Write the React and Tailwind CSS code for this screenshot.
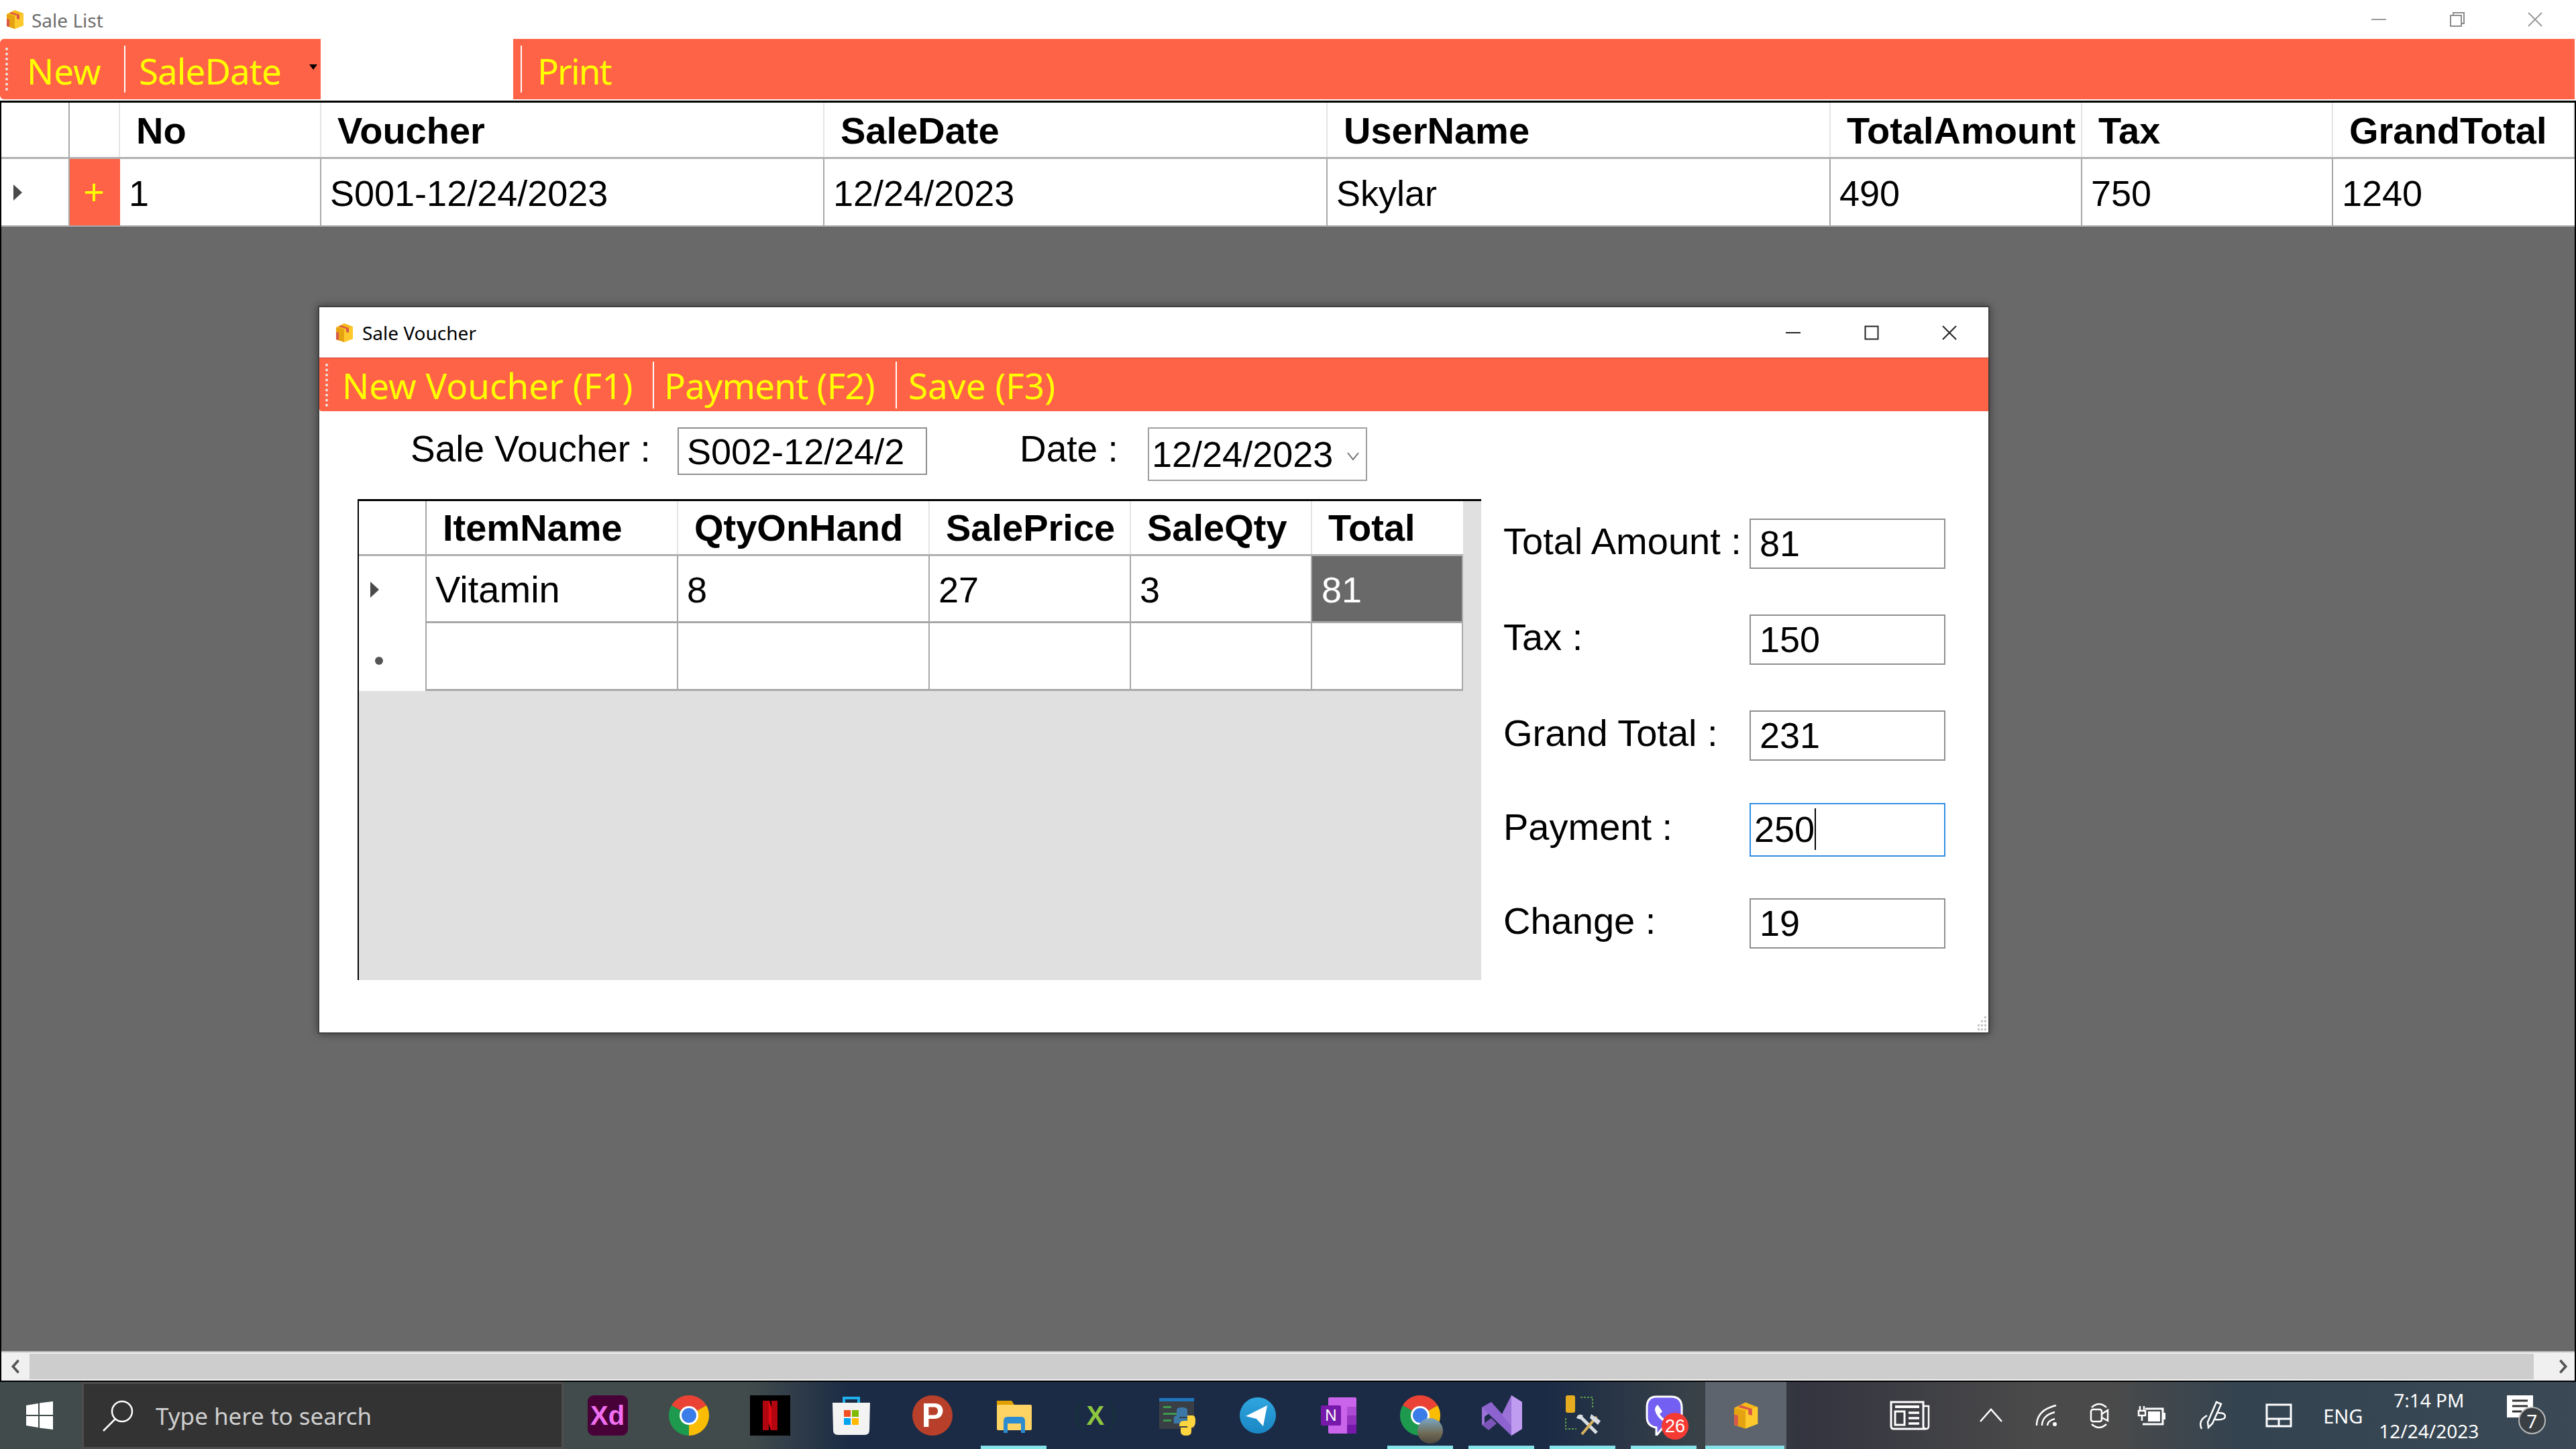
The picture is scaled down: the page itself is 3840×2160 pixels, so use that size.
import React from 'react';

const UI_FONT = "font-['Noto_Sans',sans-serif]";

// main list columns
const LIST_COLS = 'grid grid-cols-[102px_75px_300px_750px_750px_750px_375px_374px_360px]';
const VOUCHER_COLS = 'grid grid-cols-[101px_375px_375px_300px_270px_225px]';

const LIST_HEAD = ['', '', 'No', 'Voucher', 'SaleDate', 'UserName', 'TotalAmount', 'Tax', 'GrandTotal'];
const LIST_ROW = ['1', 'S001-12/24/2023', '12/24/2023', 'Skylar', '490', '750', '1240'];
const VOUCHER_HEAD = ['ItemName', 'QtyOnHand', 'SalePrice', 'SaleQty', 'Total'];

const FIELDS = [
  { label: 'Total Amount :', value: '81', row: 'mt-[160px] h-[75px]', box: 'border-[#8f8f8f]' },
  { label: 'Tax :', value: '150', row: 'mt-[68px] h-[75px]', box: 'border-[#8f8f8f]' },
  { label: 'Grand Total :', value: '231', row: 'mt-[68px] h-[75px]', box: 'border-[#8f8f8f]' },
  { label: 'Payment :', value: '250', row: 'mt-[63px] h-[80px]', box: 'border-[#2f8fe0]', caret: true },
  { label: 'Change :', value: '19', row: 'mt-[62px] h-[75px]', box: 'border-[#8f8f8f]' },
];

function BoxIcon({ className }) {
  return (
    <svg viewBox="0 0 30 30" className={className}>
      <path d="M3 7 L15 1 L28 6 L28 24 L15 29 L3 25 Z" fill="#f6b91a" />
      <path d="M15 10 L28 6 L28 24 L15 29 Z" fill="#fdc92c" />
      <path d="M3 7 L15 10 L15 29 L3 25 Z" fill="#e5a312" />
      <path d="M10 4 L22 8 L22 15 L18 14 L18 9 L7 6 Z" fill="#d9574a" />
      <path d="M3 14 L7 15 L7 26 L3 25 Z" fill="#d9574a" />
    </svg>
  );
}

function Grip() {
  return <div className="w-[4px] h-[64px] border-l-[4px] border-dotted border-[#e8e8e8]" />;
}

function Sep() {
  return <div className="w-[2px] h-[70px] bg-white" />;
}

function ToolText({ children, className = '' }) {
  return <span className={`${UI_FONT} text-[53px] leading-none text-[#ffff00] whitespace-nowrap ${className}`}>{children}</span>;
}

function MinIcon({ color }) {
  return <svg width="24" height="4" viewBox="0 0 24 4"><rect width="22" height="2" y="1" fill={color} /></svg>;
}

function MaxIcon() {
  return <svg width="22" height="22" viewBox="0 0 22 22"><rect x="1.5" y="1.5" width="19" height="19" fill="none" stroke="#222" strokeWidth="2" /></svg>;
}

function RestoreIcon() {
  return (
    <svg width="22" height="22" viewBox="0 0 22 22" fill="none" stroke="#8c8c8c" strokeWidth="2">
      <rect x="1" y="5" width="16" height="16" />
      <path d="M5 5 V1 H21 V17 H17" />
    </svg>
  );
}

function CloseIcon({ color }) {
  return (
    <svg width="22" height="22" viewBox="0 0 22 22" fill="none" stroke={color} strokeWidth="2">
      <path d="M1 1 L21 21 M21 1 L1 21" />
    </svg>
  );
}

function WinControl({ children }) {
  return <div className="w-[116px] flex items-center justify-center">{children}</div>;
}

function ArrowMark({ className = '' }) {
  return <div className={`w-0 h-0 border-y-[12px] border-y-transparent border-l-[13px] border-l-[#4a4a4a] ${className}`} />;
}

/* ---- taskbar pictures ---- */

function ChromeLogo() {
  return (
    <svg viewBox="0 0 60 60" className="w-[60px] h-[60px]">
      <path d="M30 30 L4 15 A30 30 0 0 1 56 15 Z" fill="#ea4335" />
      <path d="M30 30 L56 15 A30 30 0 0 1 30 60 Z" fill="#fbbc04" />
      <path d="M30 30 L30 60 A30 30 0 0 1 4 15 Z" fill="#1e9a4e" />
      <circle cx="30" cy="30" r="14" fill="#fff" />
      <circle cx="30" cy="30" r="11" fill="#3b7de8" />
    </svg>
  );
}

function StoreLogo() {
  return (
    <svg viewBox="0 0 60 60" className="w-[60px] h-[60px]">
      <path d="M19 14 V4 H41 V14" fill="none" stroke="#1fb0ee" strokeWidth="4" />
      <path d="M2 11 H58 L57 52 Q57 59 50 59 H10 Q3 59 3 52 Z" fill="#f3f3f3" />
      <rect x="19" y="22" width="10" height="10" fill="#f25022" />
      <rect x="31" y="22" width="10" height="10" fill="#7fba00" />
      <rect x="19" y="34" width="10" height="10" fill="#00a4ef" />
      <rect x="31" y="34" width="10" height="10" fill="#ffb900" />
    </svg>
  );
}

function FolderLogo() {
  return (
    <svg viewBox="0 0 60 60" className="w-[60px] h-[60px]">
      <path d="M4 8 H26 L32 17 H4 Z" fill="#e0a100" />
      <rect x="4" y="14" width="52" height="38" rx="2" fill="#ffd465" />
      <path d="M14 56 V38 Q14 32 20 32 H40 Q46 32 46 38 V56 H40 V42 H20 V56 Z" fill="#2d8bd0" />
    </svg>
  );
}

function PythonLogo() {
  return (
    <svg viewBox="0 0 60 60" className="w-[60px] h-[60px]">
      <rect x="4" y="4" width="52" height="46" fill="#3a3f45" />
      <rect x="4" y="4" width="52" height="5" fill="#1f75bd" />
      <rect x="10" y="16" width="12" height="3" fill="#3c9a4c" />
      <rect x="10" y="26" width="24" height="3" fill="#3c9a4c" />
      <rect x="10" y="36" width="12" height="3" fill="#3c9a4c" />
      <path d="M30 22 Q30 18 38 18 Q46 18 46 22 V32 H34 V34 H46 Q46 42 38 42 H26 Q24 30 30 30 Z" fill="#3b78a8" />
      <path d="M46 30 H54 Q58 30 58 38 Q58 48 52 48 V54 Q52 60 44 60 Q36 60 36 54 V48 H46 V46 H34 Q34 38 40 38 H46 Z" fill="#ffd53f" />
    </svg>
  );
}

function TelegramLogo() {
  return (
    <svg viewBox="0 0 60 60" className="w-[60px] h-[60px]">
      <defs>
        <linearGradient id="tg" x1="0" y1="0" x2="0" y2="1">
          <stop offset="0" stopColor="#2fa6e0" />
          <stop offset="1" stopColor="#1a86c4" />
        </linearGradient>
      </defs>
      <circle cx="30" cy="30" r="27" fill="url(#tg)" />
      <path d="M12 31 L44 15 L38 46 L28 35 Z" fill="#fff" />
    </svg>
  );
}

function OneNoteLogo() {
  return (
    <svg viewBox="0 0 60 60" className="w-[60px] h-[60px]">
      <rect x="14" y="3" width="42" height="54" rx="2" fill="#ca64ea" />
      <rect x="42" y="17" width="14" height="13" fill="#ae4bd5" />
      <rect x="42" y="30" width="14" height="14" fill="#9332bf" />
      <rect x="42" y="44" width="14" height="13" fill="#7719aa" />
      <rect x="3" y="15" width="30" height="30" rx="2" fill="#7719aa" />
      <text x="18" y="38" textAnchor="middle" fontFamily="Liberation Sans" fontSize="24" fill="#fff">N</text>
    </svg>
  );
}

function VisualStudioLogo() {
  return (
    <svg viewBox="0 0 60 60" className="w-[60px] h-[60px]">
      <path d="M44 0 L60 10 V50 L44 60 L14 24 L4 32 V46 L14 52 L0 44 V18 L14 10 L30 28 Z" fill="#9a72d8" />
      <path d="M44 0 L60 10 V50 L44 60 Z" fill="#c09cf0" />
      <path d="M0 18 L14 10 L44 46 V60 Z" fill="#8d63cf" />
      <path d="M0 44 L14 34 L22 42 L10 52 Z" fill="#7c55b8" />
    </svg>
  );
}

function ToolsLogo() {
  return (
    <svg viewBox="0 0 60 60" className="w-[60px] h-[60px]">
      <rect x="4" y="0" width="14" height="26" rx="3" fill="#e5ac20" />
      <path d="M26 3 H44 V20" fill="none" stroke="#5d9b4a" strokeWidth="2" strokeDasharray="3 2" />
      <path d="M4 34 V50 H20" fill="none" stroke="#5d9b4a" strokeWidth="2" strokeDasharray="3 2" />
      <path d="M24 30 L50 56" stroke="#d8dde2" strokeWidth="5" />
      <path d="M20 34 Q22 26 30 30 L26 36 Z" fill="#d8dde2" />
      <path d="M50 32 L28 58" stroke="#d9b25c" strokeWidth="4" />
      <path d="M42 28 L56 38 L52 44 L40 34 Z" fill="#d8dde2" />
    </svg>
  );
}

function ViberLogo() {
  return (
    <svg viewBox="0 0 60 60" className="w-[60px] h-[60px]">
      <path d="M18 2 H40 Q56 2 56 18 V34 Q56 48 40 48 H28 L18 60 V48 Q4 46 4 32 V18 Q4 2 18 2 Z" fill="#7360f2" stroke="#fff" strokeWidth="3" />
      <path d="M20 14 L27 24 L23 28 Q27 34 33 37 L37 33 L44 40 Q38 46 30 40 Q18 32 16 22 Q16 17 20 14 Z" fill="#fff" />
    </svg>
  );
}

function AppCell({ under, active, children }) {
  return (
    <div className={`relative w-[121.2px] h-full flex items-center justify-center ${active ? 'bg-[#5d646e]' : ''}`}>
      {children}
      {under && <div className={`absolute bottom-0 h-[5px] bg-[#86e3ec] ${active ? 'left-0 right-[3px]' : 'left-[11px] w-[98px]'}`} />}
    </div>
  );
}

function TrayIcon({ className, children }) {
  return (
    <div className={`w-[60px] h-[60px] flex items-center justify-center ${className}`}>
      <svg viewBox="0 0 60 60" className="w-[60px] h-[60px]" fill="none" stroke="#fff" strokeWidth="2.5">{children}</svg>
    </div>
  );
}

function Taskbar() {
  return (
    <div className="h-[100px] flex items-stretch bg-[linear-gradient(90deg,#414b4b_0%,#414b4b_29%,#1b2b45_33%,#1b2b45_60%,#3a4248_66%,#33343f_70%,#4a4a4a_79%,#4a4a4a_82%,#334350_87%,#3a4955_100%)]">
      <div className="w-[122px] flex items-center justify-center pr-[4px]">
        <svg viewBox="0 0 40 42" className="w-[40px] h-[42px]" fill="#fff">
          <path d="M0 6 L18 3 V20 H0 Z" />
          <path d="M20 2.5 L40 0 V20 H20 Z" />
          <path d="M0 22 H18 V39 L0 36 Z" />
          <path d="M20 22 H40 V42 L20 39.5 Z" />
        </svg>
      </div>
      <div className="w-[718px] border-[3px] border-[#4d4d4d] bg-[#333333] flex items-center pl-[27px]">
        <svg viewBox="0 0 48 48" className="w-[48px] h-[48px]" fill="none" stroke="#fff" strokeWidth="2.5">
          <circle cx="30" cy="18" r="15" />
          <path d="M20 29 L2 47" />
        </svg>
        <span className={`${UI_FONT} ml-[32px] text-[35px] leading-none text-[#cfcfcf] whitespace-nowrap`}>Type here to search</span>
      </div>
      <div className="ml-[5px] flex items-stretch">
        <AppCell>
          <div className="w-[60px] h-[60px] rounded-[9px] bg-[#470137] flex items-center justify-center font-['Liberation_Sans',sans-serif] font-bold text-[40px] leading-none text-[#f06ef0]">Xd</div>
        </AppCell>
        <AppCell><ChromeLogo /></AppCell>
        <AppCell>
          <svg viewBox="0 0 60 60" className="w-[60px] h-[60px]">
            <rect width="60" height="60" fill="#000" />
            <path d="M19 8 H29 L41 52 H31 Z" fill="#e50914" />
            <rect x="19" y="8" width="9" height="44" fill="#b1060f" />
            <rect x="32" y="8" width="9" height="44" fill="#b1060f" />
          </svg>
        </AppCell>
        <AppCell><StoreLogo /></AppCell>
        <AppCell>
          <div className="w-[60px] h-[60px] rounded-full bg-[#b8402a] flex items-center justify-center font-['Liberation_Sans',sans-serif] font-bold text-[50px] leading-none text-white">P</div>
        </AppCell>
        <AppCell under><FolderLogo /></AppCell>
        <AppCell>
          <div className="w-[60px] h-[60px] flex items-center justify-center font-['Liberation_Sans',sans-serif] font-bold text-[40px] leading-none text-[#8dc63f] border-x-[3px] border-[#16333c] rounded-[30px]">X</div>
        </AppCell>
        <AppCell><PythonLogo /></AppCell>
        <AppCell><TelegramLogo /></AppCell>
        <AppCell><OneNoteLogo /></AppCell>
        <AppCell under>
          <div className="relative">
            <ChromeLogo />
            <div className="absolute right-[-4px] bottom-[-12px] w-[38px] h-[38px] rounded-full bg-[linear-gradient(180deg,#7ba7c4,#6f6a55_60%,#4d4a3d)]" />
          </div>
        </AppCell>
        <AppCell under><VisualStudioLogo /></AppCell>
        <AppCell under><ToolsLogo /></AppCell>
        <AppCell under>
          <div className="relative">
            <ViberLogo />
            <div className="absolute right-[-6px] bottom-[-6px] w-[40px] h-[40px] rounded-full bg-[#f53a34] flex items-center justify-center font-['Liberation_Sans',sans-serif] text-[27px] leading-none text-white">26</div>
          </div>
        </AppCell>
        <AppCell under active><BoxIcon className="w-[44px] h-[42px]" /></AppCell>
      </div>

      {/* tray */}
      <div className="flex items-center">
        <TrayIcon className="ml-[154px]">
          <path d="M2 10 H50 V46 Q50 50 54 50 H6 Q2 50 2 46 Z" strokeWidth="3" />
          <path d="M50 16 H58 V46 Q58 50 54 50" />
          <rect x="8" y="15" width="36" height="4" fill="#fff" stroke="none" />
          <rect x="8" y="24" width="14" height="20" strokeWidth="3" />
          <path d="M28 26 H44 M28 34 H44 M28 42 H44" strokeWidth="3.5" />
        </TrayIcon>
        <TrayIcon className="ml-[61px]"><path d="M14 39 L30 21 L46 39" /></TrayIcon>
        <TrayIcon className="ml-[23px]">
          <path d="M15 45 Q15 22 44 15" />
          <path d="M23 45 Q23 30 42 25" />
          <path d="M31 45 Q31 38 42 35" />
          <circle cx="42" cy="43" r="3" fill="#fff" stroke="none" />
        </TrayIcon>
        <TrayIcon className="ml-[18px]">
          <path d="M19 18 Q30 8 41 18" />
          <rect x="18" y="21" width="16" height="18" rx="3" />
          <path d="M34 28 L43 22 V38 L34 33" />
          <path d="M19 43 Q30 53 41 43" />
        </TrayIcon>
        <TrayIcon className="ml-[19px]">
          <path d="M12 16 V23 M18 16 V23 M10 23 H20 V30 H10 Z M15 30 V38" />
          <path d="M20 20 H46 V43 H16" strokeWidth="3" />
          <rect x="24" y="24" width="18" height="15" fill="#fff" stroke="none" />
          <rect x="47" y="26" width="3" height="10" fill="#fff" stroke="none" />
        </TrayIcon>
        <TrayIcon className="ml-[30px]">
          <path d="M36 10 L43 13 L30 42 L24 48 L23 40 Z" />
          <path d="M38 26 Q52 26 48 34 Q44 37 34 36" />
          <path d="M22 30 Q8 38 14 50" />
        </TrayIcon>
        <TrayIcon className="ml-[39px]">
          <rect x="12" y="14" width="36" height="32" strokeWidth="3" />
          <path d="M12 35 H48 M30 35 V46" strokeWidth="3" />
        </TrayIcon>
        <div className={`${UI_FONT} ml-[36px] w-[60px] text-[29px] leading-none text-white text-center`}>ENG</div>
        <div className={`${UI_FONT} ml-[18px] w-[160px] text-[28px] leading-none text-white text-center flex flex-col gap-[18px]`}>
          <span>7:14 PM</span>
          <span>12/24/2023</span>
        </div>
        <div className="relative ml-[27px] w-[60px] h-[60px]">
          <svg viewBox="0 0 39 33" className="absolute left-[9px] top-[0px] w-[39px] h-[33px]">
            <rect width="39" height="33" fill="#fff" />
            <path d="M8 8 H31 M8 16 H31 M8 24 H22" stroke="#333" strokeWidth="3" />
          </svg>
          <div className={`absolute left-[26px] top-[17px] w-[41px] h-[41px] rounded-full bg-[#3a3f44] border-[2px] border-[#b9b9b9] flex items-center justify-center ${UI_FONT} text-[28px] leading-none text-white`}>7</div>
        </div>
      </div>
    </div>
  );
}

/* ---- sale list ---- */

function ListGrid() {
  return (
    <div className="bg-white border-b-[2px] border-[#a9a9a9]">
      <div className={`${LIST_COLS} h-[84px] border-b-[3px] border-[#b0b0b0]`}>
        {LIST_HEAD.map((h, i) => (
          <div key={i} className={`flex items-center pl-[24px] pt-[2px] font-bold text-[56px] whitespace-nowrap ${i === 0 ? 'border-r-[2px] border-[#a8a8a8]' : 'border-r-[2px] border-[#e4e4e4]'}`}>{h}</div>
        ))}
      </div>
      <div className={`${LIST_COLS} h-[99px]`}>
        <div className="flex items-center pl-[18px] border-r-[2px] border-[#a8a8a8]"><ArrowMark /></div>
        <div className="flex items-center justify-center bg-[#ff6347] text-[#ffff00] pb-[2px] pr-[3px]">+</div>
        {LIST_ROW.map((c, i) => (
          <div key={i} className="flex items-center pl-[13px] pt-[3px] whitespace-nowrap border-r-[2px] border-[#a8a8a8] last:border-r-0">{c}</div>
        ))}
      </div>
    </div>
  );
}

/* ---- voucher window ---- */

function VoucherGrid() {
  return (
    <div className="w-[1675px] h-[717px] bg-[#e0e0e0] border-l-[2px] border-t-[3px] border-black">
      <div className={`${VOUCHER_COLS} w-[1646px] h-[82px] bg-white border-b-[3px] border-[#b0b0b0]`}>
        <div className="border-r-[2px] border-[#a8a8a8]" />
        {VOUCHER_HEAD.map((h) => (
          <div key={h} className="flex items-center pl-[24px] font-bold text-[56px] whitespace-nowrap border-r-[2px] border-[#e4e4e4] last:border-r-0">{h}</div>
        ))}
      </div>
      <div className={`${VOUCHER_COLS} w-[1646px] h-[100px] bg-white`}>
        <div className="flex items-center pl-[17px] border-r-[2px] border-[#a8a8a8]"><ArrowMark /></div>
        <div className="flex items-center pl-[13px] pt-[2px] text-[56px] border-r-[2px] border-b-[3px] border-[#a8a8a8]">Vitamin</div>
        <div className="flex items-center pl-[13px] pt-[2px] border-r-[2px] border-b-[3px] border-[#a8a8a8]">8</div>
        <div className="flex items-center pl-[13px] pt-[2px] border-r-[2px] border-b-[3px] border-[#a8a8a8]">27</div>
        <div className="flex items-center pl-[13px] pt-[2px] border-r-[2px] border-b-[3px] border-[#a8a8a8]">3</div>
        <div className="flex items-center pl-[14px] pt-[2px] bg-[#696969] text-white border-r-[2px] border-b-[3px] border-[#a8a8a8]">81</div>
      </div>
      <div className={`${VOUCHER_COLS} w-[1646px] h-[101px] bg-white`}>
        <div className="flex items-center pl-[24px] pt-[10px] border-r-[2px] border-[#a8a8a8]"><div className="w-[12px] h-[12px] rounded-full bg-[#555555]" /></div>
        {[0, 1, 2, 3, 4].map((c) => (
          <div key={c} className="border-r-[2px] border-b-[3px] border-[#a8a8a8]" />
        ))}
      </div>
    </div>
  );
}

function VoucherWindow() {
  return (
    <div className="absolute left-[472px] top-[303px] w-[2492px] h-[1085px] bg-white border-[2px] border-[#3f3f3f] shadow-[0_0_12px_rgba(0,0,0,0.45)] flex flex-col">
      <div className="h-[75px] flex items-center shrink-0">
        <BoxIcon className="ml-[22px] w-[30px] h-[30px]" />
        <span className={`${UI_FONT} ml-[12px] text-[28px] leading-none text-black`}>Sale Voucher</span>
        <div className="ml-auto h-full flex">
          <WinControl><MinIcon color="#222" /></WinControl>
          <WinControl><MaxIcon /></WinControl>
          <WinControl><CloseIcon color="#222" /></WinControl>
        </div>
      </div>
      <div className="h-[80px] shrink-0 flex items-center bg-[#ff6347] border-t-[1px] border-[#c9432c] rounded-bl-[4px] pl-[9px]">
        <Grip />
        <ToolText className="ml-[21px] w-[463px] pt-[2px]">New Voucher (F1)</ToolText>
        <Sep />
        <ToolText className="ml-[15px] w-[345px] pt-[2px] tracking-[-0.8px]">Payment (F2)</ToolText>
        <Sep />
        <ToolText className="ml-[17px] pt-[2px]">Save (F3)</ToolText>
      </div>
      <div className="flex-1 flex items-start">
        <div className="w-[1732px] pl-[57px] pt-[24px]">
          <div className="h-[81px] mb-[26px] flex items-start pl-[79px]">
            <div className="w-[398px] h-[71px] flex items-center pb-[6px] text-[55px]">Sale Voucher :</div>
            <div className="w-[372px] h-[71px] border-[2px] border-[#8f8f8f] flex items-center pl-[12px] whitespace-nowrap">S002-12/24/2</div>
            <div className="ml-[138px] w-[191px] h-[71px] flex items-center pb-[6px] text-[55px]">Date :</div>
            <div className="w-[327px] h-[80px] border-[2px] border-[#a0a0a0] flex items-center pl-[4px] whitespace-nowrap">
              12/24/2023
              <svg viewBox="0 0 20 14" className="ml-[20px] mt-[6px] w-[20px] h-[14px]" fill="none" stroke="#6f6f6f" strokeWidth="2"><path d="M2 2 L10 12 L18 2" /></svg>
            </div>
          </div>
          <VoucherGrid />
        </div>
        <div className="pl-[33px] flex flex-col">
          {FIELDS.map((f) => (
            <div key={f.label} className={`flex items-center ${f.row}`}>
              <div className="w-[367px] whitespace-nowrap text-[56px] pb-[8px]">{f.label}</div>
              <div className={`w-[292px] h-full border-[2px] ${f.box} flex items-center pl-[13px] pb-[2px]`}>
                {f.caret ? <span className="-ml-[8px]">{f.value}</span> : f.value}
                {f.caret && <div className="w-[2px] h-[62px] bg-black" />}
              </div>
            </div>
          ))}
        </div>
      </div>
      <svg viewBox="0 0 14 22" className="absolute right-[2px] bottom-[2px] w-[14px] h-[22px]" fill="#c4c4c4">
        <rect x="10" y="0" width="3" height="3" />
        <rect x="10" y="6" width="3" height="3" />
        <rect x="5" y="6" width="3" height="3" />
        <rect x="10" y="12" width="3" height="3" />
        <rect x="5" y="12" width="3" height="3" />
        <rect x="0" y="12" width="3" height="3" />
        <rect x="10" y="18" width="3" height="3" />
        <rect x="5" y="18" width="3" height="3" />
        <rect x="0" y="18" width="3" height="3" />
      </svg>
    </div>
  );
}

export default function App() {
  return (
    <div className="w-[3840px] h-[2160px] flex flex-col bg-white overflow-hidden font-['Liberation_Sans',Arial,sans-serif] text-[54px] leading-none text-black">
      {/* title bar */}
      <div className="h-[58px] flex items-center shrink-0">
        <BoxIcon className="ml-[7px] w-[30px] h-[30px]" />
        <span className={`${UI_FONT} ml-[10px] pt-[2px] text-[28px] leading-none text-[#6d6d6d]`}>Sale List</span>
        <div className="ml-auto h-full flex pr-[3px]">
          <WinControl><MinIcon color="#9a9a9a" /></WinControl>
          <WinControl><RestoreIcon /></WinControl>
          <WinControl><CloseIcon color="#9a9a9a" /></WinControl>
        </div>
      </div>

      {/* tool strip */}
      <div className="h-[92px] shrink-0 flex items-start">
        <div className="w-[478px] h-[90px] bg-[#ff6347] rounded-l-[6px] flex items-center pl-[8px]">
          <Grip />
          <ToolText className="ml-[28px] w-[145px] pt-[4px]">New</ToolText>
          <Sep />
          <ToolText className="ml-[20px] w-[254px] pt-[4px] tracking-[-1px]">SaleDate</ToolText>
          <div className="mb-[6px] w-0 h-0 border-x-[6px] border-x-transparent border-t-[8px] border-t-black" />
        </div>
        <div className="ml-[287px] flex-1 h-[90px] mr-[2px] bg-[#ff6347] flex items-center pl-[11px]">
          <Sep />
          <ToolText className="ml-[23px] pt-[4px] tracking-[-2px]">Print</ToolText>
        </div>
      </div>

      {/* mdi area */}
      <div className="relative flex-1 flex flex-col bg-[#696969] border-x-[2px] border-t-[3px] border-b-[2px] border-black">
        <ListGrid />
        <div className="flex-1" />
        <div className="h-[44px] bg-[#f0f0f0] flex items-stretch border-t-[2px] border-[#bdbdbd]">
          <div className="w-[42px] flex items-center justify-center">
            <svg viewBox="0 0 14 24" className="w-[14px] h-[22px]" fill="none" stroke="#555" strokeWidth="4"><path d="M12 2 L3 12 L12 22" /></svg>
          </div>
          <div className="flex-1 my-[2px] bg-[#cdcdcd]" />
          <div className="w-[61px] flex items-center justify-center pl-[26px]">
            <svg viewBox="0 0 14 24" className="w-[14px] h-[22px]" fill="none" stroke="#555" strokeWidth="4"><path d="M2 2 L11 12 L2 22" /></svg>
          </div>
        </div>
        <VoucherWindow />
      </div>

      <Taskbar />
    </div>
  );
}
